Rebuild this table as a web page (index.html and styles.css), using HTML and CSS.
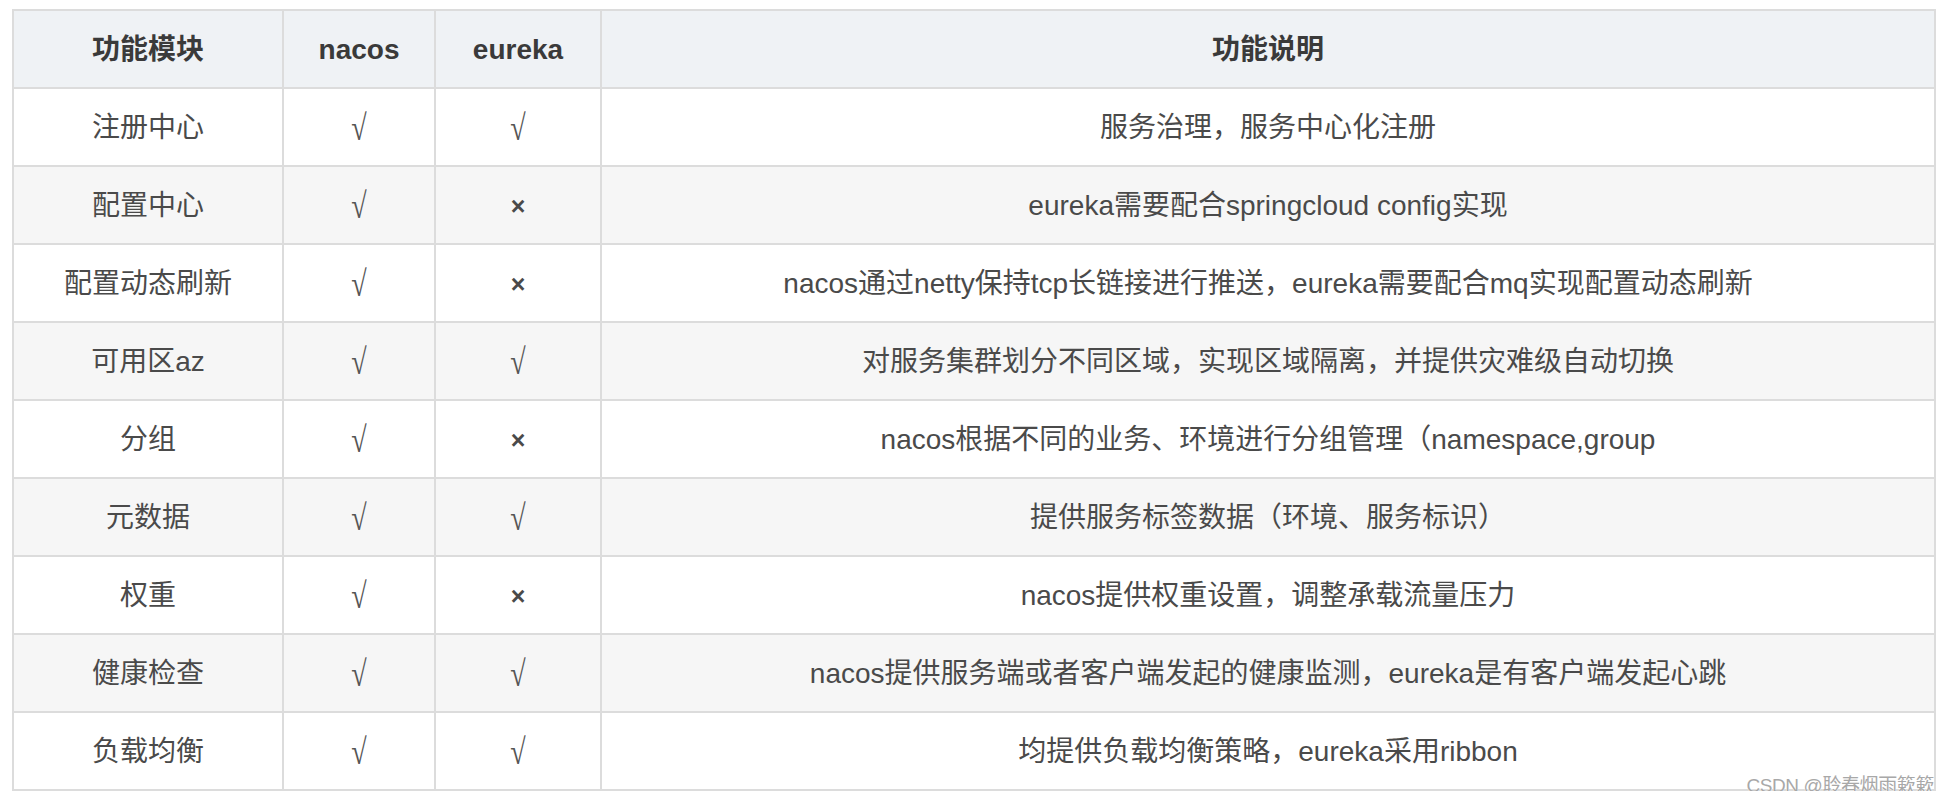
FILE: index.html
```html
<!DOCTYPE html>
<html lang="zh-CN">
<head>
<meta charset="utf-8">
<title>nacos vs eureka</title>
<link rel="stylesheet" href="styles.css">
</head>
<body>
<div class="wrap">
  <table class="cmp">
    <colgroup>
      <col class="c1"><col class="c2"><col class="c3"><col class="c4">
    </colgroup>
    <thead>
      <tr><th>功能模块</th><th>nacos</th><th>eureka</th><th>功能说明</th></tr>
    </thead>
    <tbody>
      <tr><td>注册中心</td><td class="ok"><span>√</span></td><td class="ok"><span>√</span></td><td>服务治理，服务中心化注册</td></tr>
      <tr><td>配置中心</td><td class="ok"><span>√</span></td><td class="no">×</td><td>eureka需要配合springcloud config实现</td></tr>
      <tr><td>配置动态刷新</td><td class="ok"><span>√</span></td><td class="no">×</td><td>nacos通过netty保持tcp长链接进行推送，eureka需要配合mq实现配置动态刷新</td></tr>
      <tr><td>可用区az</td><td class="ok"><span>√</span></td><td class="ok"><span>√</span></td><td>对服务集群划分不同区域，实现区域隔离，并提供灾难级自动切换</td></tr>
      <tr><td>分组</td><td class="ok"><span>√</span></td><td class="no">×</td><td>nacos根据不同的业务、环境进行分组管理（namespace,group</td></tr>
      <tr><td>元数据</td><td class="ok"><span>√</span></td><td class="ok"><span>√</span></td><td>提供服务标签数据（环境、服务标识）</td></tr>
      <tr><td>权重</td><td class="ok"><span>√</span></td><td class="no">×</td><td>nacos提供权重设置，调整承载流量压力</td></tr>
      <tr><td>健康检查</td><td class="ok"><span>√</span></td><td class="ok"><span>√</span></td><td>nacos提供服务端或者客户端发起的健康监测，eureka是有客户端发起心跳</td></tr>
      <tr><td>负载均衡</td><td class="ok"><span>√</span></td><td class="ok"><span>√</span></td><td>均提供负载均衡策略，eureka采用ribbon</td></tr>
    </tbody>
  </table>
  <div class="watermark">CSDN @聆春烟雨簌簌</div>
</div>
</body>
</html>
```
FILE: styles.css
```css
html, body {
  margin: 0;
  padding: 0;
  background: #ffffff;
}
body {
  font-family: "Liberation Sans", "Noto Sans CJK SC", sans-serif;
  color: #4a4a4a;
}
.wrap {
  position: relative;
  padding: 9px 0 0 12px;
  width: 1924px;
}
.cmp {
  border-collapse: collapse;
  table-layout: fixed;
  width: 1924px;
  border: 2px solid #dcdcdc;
}
.c1 { width: 270px; }
.c2 { width: 152px; }
.c3 { width: 166px; }
.c4 { width: auto; }
.cmp th, .cmp td {
  border: 2px solid #dcdcdc;
  text-align: center;
  vertical-align: middle;
  padding: 2px 0 0 0;
  font-size: 28px;
  line-height: 1.2;
}
.cmp tr { height: 78px; }
.cmp th {
  background: #eff2f5;
  color: #3a3a3a;
  font-weight: 700;
}
.cmp tbody tr:nth-child(even) td { background: #f6f6f6; }
.cmp td.ok {
  font-family: "Liberation Serif", serif;
  font-size: 36px;
  line-height: 1;
  color: #555555;
}
.cmp td.ok span {
  display: inline-block;
  transform: scaleX(0.78);
}
.cmp td.no {
  font-size: 25px;
  font-weight: 700;
  color: #4a4a4a;
}
.watermark {
  position: absolute;
  right: 2px;
  bottom: -6px;
  font-family: "Liberation Sans", "Noto Sans CJK SC", sans-serif;
  font-size: 19px;
  color: #a8a8a8;
  text-shadow: 0 0 1px #ffffff, 0 0 1px #ffffff;
  letter-spacing: -0.4px;
}
```
